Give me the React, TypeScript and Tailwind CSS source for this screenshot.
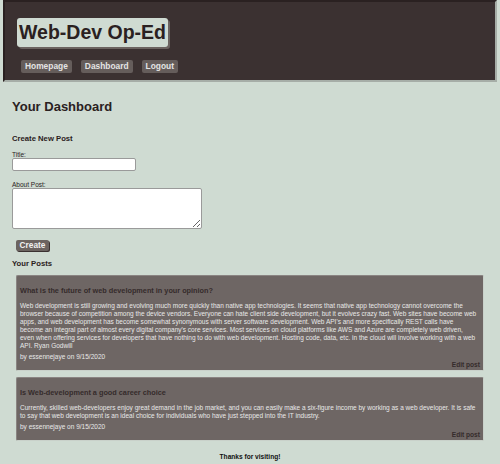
const posts = [
  {
    title: 'What is the future of web development in your opinion?',
    lines: [
      'Web development is still growing and evolving much more quickly than native app technologies. It seems that native app technology cannot overcome the',
      'browser because of competition among the device vendors. Everyone can hate client side development, but it evolves crazy fast. Web sites have become web',
      'apps, and web development has become somewhat synonymous with server software development. Web API\'s and more specifically REST calls have',
      'become an integral part of almost every digital company\'s core services. Most services on cloud platforms like AWS and Azure are completely web driven,',
      'even when offering services for developers that have nothing to do with web development. Hosting code, data, etc. in the cloud will involve working with a web',
      'API. Ryan Godwill',
    ],
    author: 'essennejaye',
    date: '9/15/2020',
  },
  {
    title: 'Is Web-development a good career choice',
    lines: [
      'Currently, skilled web-developers enjoy great demand in the job market, and you can easily make a six-figure income by working as a web developer. It is safe',
      'to say that web development is an ideal choice for individuals who have just stepped into the IT industry.',
    ],
    author: 'essennejaye',
    date: '9/15/2020',
  },
];

const navLinks = ['Homepage', 'Dashboard', 'Logout'];

const App = () => {
  return (
    <div className="min-h-screen bg-[#cfdbd2] font-['Liberation_Sans',Arial,sans-serif] pb-[6px]">
      {/* header */}
      <header className="mx-[3px] h-[82px] bg-[#3b3131] border-2 border-t-[#2a2121] border-l-[#2a2121] border-r-[#a6ada7] border-b-[#a6ada7] pt-[16px] pl-[12px]">
        <h1 className="inline-block h-[29px] bg-[#cfdbd2] text-[#2a2121] font-bold text-[19.5px] leading-[29px] px-[2px] rounded-[3px] shadow-[2px_2px_0_#6b6360]">
          Web-Dev Op-Ed
        </h1>
        <nav className="flex gap-[9px] mt-[13px] pl-[4px]">
          {navLinks.map((link) => (
            <a
              key={link}
              className="h-[13px] px-[4px] bg-[#655d5b] text-[#e4e4e4] font-bold text-[8.4px] leading-[13px] rounded-[2px]"
            >
              {link}
            </a>
          ))}
        </nav>
      </header>

      <main className="px-[12px]">
        <h2 className="mt-[17px] text-[13px] leading-[15px] font-bold text-[#2a2121]">Your Dashboard</h2>

        {/* new post form */}
        <h3 className="mt-[20px] text-[7.7px] leading-[10px] font-bold text-[#2a2121]">Create New Post</h3>
        <label className="block mt-[7px] text-[6.5px] leading-[7px] text-[#2a2121]">Title:</label>
        <input className="block w-[124px] h-[13px] bg-white border border-[#9a9a9a] rounded-[2px]" />
        <label className="block mt-[10px] text-[6.5px] leading-[7px] text-[#2a2121]">About Post:</label>
        <textarea className="block w-[190px] h-[41px] bg-white border border-[#9a9a9a] rounded-[2px]" />
        <button className="block mt-[11px] ml-[4px] w-[33px] h-[11px] bg-[#6b6360] text-[#f0f0f0] font-bold text-[8.3px] leading-[11px] rounded-[2px] shadow-[1px_1px_0_#3b3131]">
          Create
        </button>

        {/* posts */}
        <h3 className="mt-[8px] text-[7.7px] leading-[10px] font-bold text-[#2a2121]">Your Posts</h3>
        <div className="mx-[4px] flex flex-col gap-[6px] mt-[6px]">
          {posts.map((post) => (
            <div
              key={post.title}
              className="bg-[#6e6664] border border-t-[#8a8482] border-l-[#8a8482] border-r-[#c9d1ca] border-b-[#c9d1ca] rounded-[2px] px-[3px] pt-[10px] pb-[1px]"
            >
              <h4 className="text-[7.3px] leading-[10px] font-bold text-[#352b2b]">{post.title}</h4>
              <p className="mt-[6px] text-[6.53px] leading-[8px] text-[#e8e8e8]">
                {post.lines.map((line, i) => (
                  <span key={i}>
                    {line}
                    {i < post.lines.length - 1 && <br />}
                  </span>
                ))}
              </p>
              <p className="mt-[3px] text-[6.53px] leading-[8px] text-[#e8e8e8]">
                by {post.author} on {post.date}
              </p>
              <p className="text-right text-[6.6px] leading-[8px] font-bold text-[#352b2b]">Edit post</p>
            </div>
          ))}
        </div>
      </main>

      <footer className="mt-[12px] text-center text-[6.6px] leading-[8px] font-bold text-[#111]">Thanks for visiting!</footer>
    </div>
  );
};

export default App;
